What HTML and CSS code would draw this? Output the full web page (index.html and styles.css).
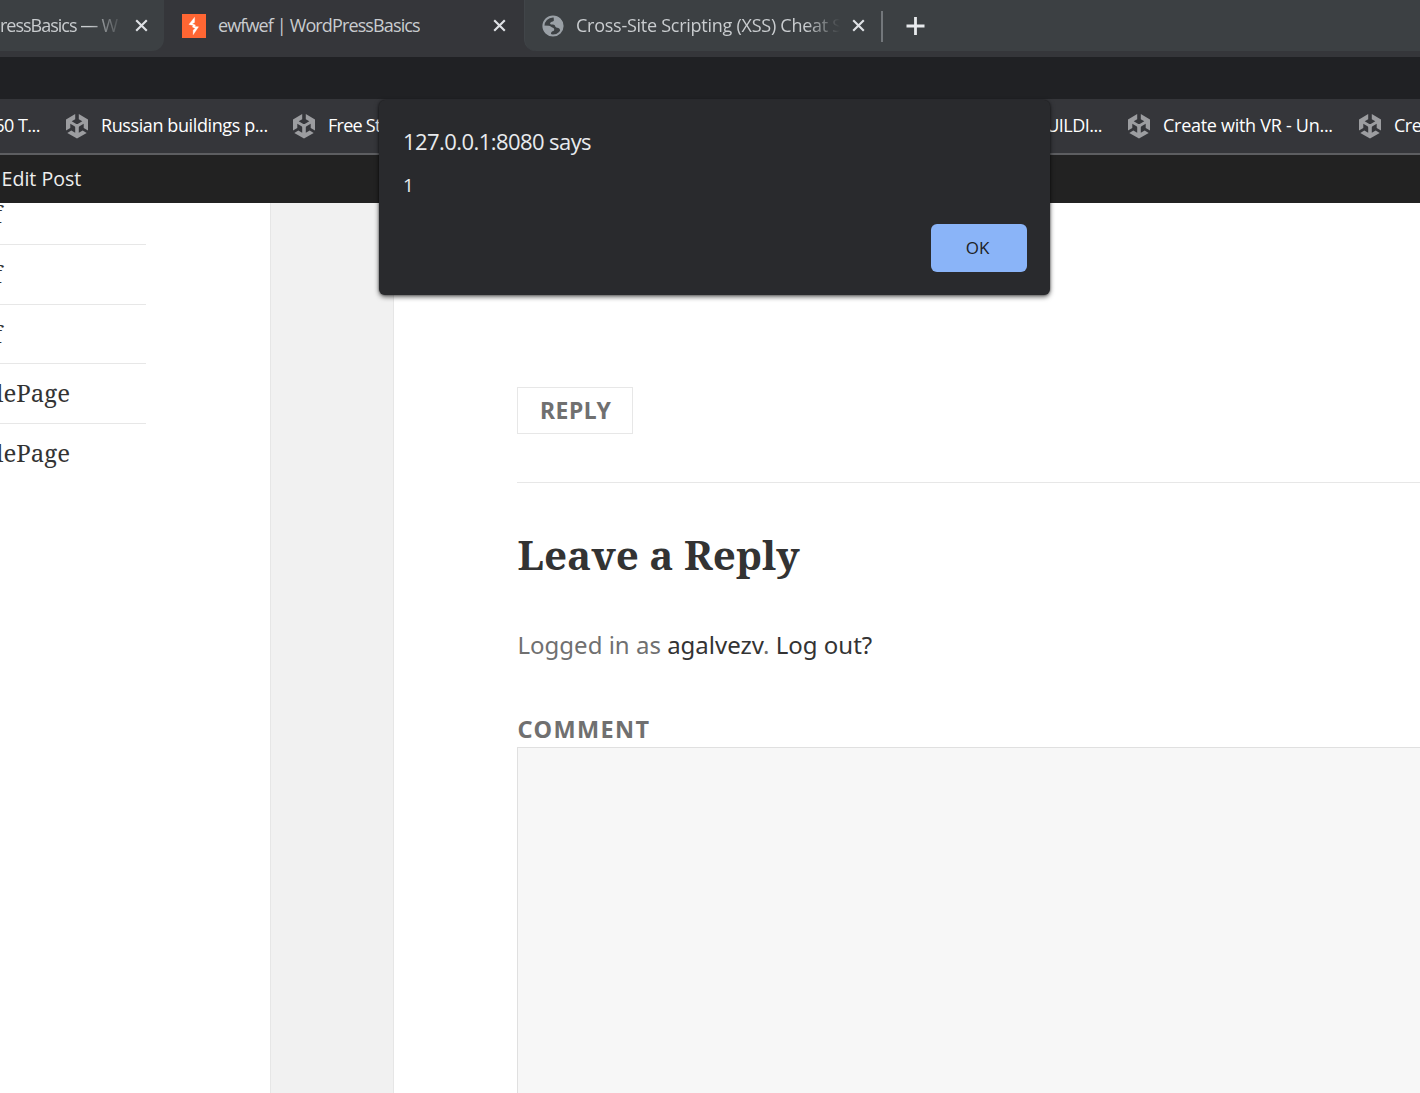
FILE: index.html
```
<!DOCTYPE html>
<html lang="en">
<head>
<meta charset="utf-8">
<title>ewfwef | WordPressBasics</title>
<link rel="stylesheet" href="styles.css">
</head>
<body>
<svg class="defs" aria-hidden="true">
  <symbol id="cube" viewBox="0 0 24 26">
    <path d="M10.2 1v5.2L6.7 8.2l4.6 2.7q.7.4 1.4 0l4.6-2.7-3.5-2V1L23 6.5v11l-4.3-2.6v-4.1l-4.2 2.5q-.7.4-.7 1.2v5.2l3.9-2.2 4 2.4L12 25.5 2.3 19.9l4-2.4 3.9 2.2v-5.2q0-.8-.7-1.2l-4.2-2.5v4.1L1 17.5v-11z"/>
  </symbol>
  <symbol id="close" viewBox="0 0 14 14"><path d="M1.3 1.3l11.4 11.4M12.7 1.3L1.3 12.7"/></symbol>
</svg>
<header class="browser">
  <div class="tabs">
    <div class="tab tab-prev">
      <span class="label t-prev fade">ressBasics <span class="dash">—</span> W</span>
      <svg class="close"><use href="#close"/></svg>
    </div>
    <div class="tab tab-active">
      <svg class="burp" viewBox="0 0 24 24"><path class="burp-bg" d="M0 0h24v24H0z"/><path class="bolt" d="M12.600 3.200v5.200L10.300 9.800l3.200 1.300-.8 1.400 3.900.3-5.400 7.900v-4.600l2.100-1.700-3-1.500.9-1.500-4.300-1z"/></svg>
      <span class="label t-active">ewfwef | WordPressBasics</span>
      <svg class="close"><use href="#close"/></svg>
    </div>
    <div class="tab tab-next">
      <svg class="globe" viewBox="0 0 22 22"><circle class="ring" cx="11" cy="11" r="9.6"/><path class="land" d="M12.5 1.5C10.8 3 12.5 4.6 11.6 6 10.8 7 8.8 6.4 8.2 8c-.4 1.2.6 1.7 2.2 1.6 2.4-.2 2.6 1.4 3.2 2.5.6 1 2.6.6 3.6 1.4.8.6.6 2 1.6 2.2C23 10 20 2 12.5 1.5zM1.5 10.5l5.3.3c1.8 0 2.2 1.4 3.4 1.8 1.6.6 2.3 1.2 1.9 2.7-.4 1.2-2.8.9-3.1 2.6-.1 1 .3 1.6.6 2.5C4 20 1 15 1.5 10.5z"/></svg>
      <span class="label t-next fade">Cross-Site Scripting (XSS) Cheat S</span>
      <svg class="close"><use href="#close"/></svg>
    </div>
    <span class="separator"></span>
    <svg class="plus" viewBox="0 0 18 18"><path d="M9 0v18M0 9h18"/></svg>
  </div>
  <div class="toolbar"></div>
  <nav class="bookmarks">
    <span class="bm bm1"><span class="b-end">60 T...</span></span>
    <span class="bm bm2"><svg><use href="#cube"/></svg><span class="b-russian">Russian buildings p...</span></span>
    <span class="bm bm3"><svg><use href="#cube"/></svg><span class="b-free">Free St</span></span>
    <span class="bm bm4"><span class="b-build">UILDI...</span></span>
    <span class="bm bm5"><svg><use href="#cube"/></svg><span class="b-vr">Create with VR - Un...</span></span>
    <span class="bm bm6"><svg><use href="#cube"/></svg><span>Cre</span></span>
  </nav>
</header>
<div class="adminbar"><span>Edit Post</span></div>
<div class="page">
  <aside class="sidebar">
    <ul class="posts">
      <li><span class="short">f</span></li>
      <li><span class="short">f</span></li>
      <li><span class="short">f</span></li>
      <li><span>lePage</span></li>
      <li><span>lePage</span></li>
    </ul>
  </aside>
  <main class="content">
    <div class="comments"><a class="reply">REPLY</a></div>
    <section class="respond">
      <h2><span>Leave a Reply</span></h2>
      <p class="logged">Logged in as <a>agalvezv</a>. <a>Log out?</a></p>
      <label>COMMENT</label>
      <div class="textarea"></div>
    </section>
  </main>
</div>
<div class="dialog">
  <div class="origin"><span>127.0.0.1:8080 says</span></div>
  <div class="message">1</div>
  <button>OK</button>
</div>
</body>
</html>
```
FILE: styles.css
```
* { box-sizing: border-box; }
body { margin: 0; width: 1420px; height: 1093px; overflow: hidden; display: flex; flex-direction: column; background: #fff; font-family: "Noto Sans", "Open Sans", sans-serif; }
.defs { display: none; }
.browser { flex: none; color: #fff; }
.tabs { display: flex; height: 57px; background: #35363a; }
.tab { display: flex; align-items: center; height: 51px; flex: none; background: #3c4043; }
.label { white-space: nowrap; overflow: hidden; flex: none; color: #c9cccf; font-family: "Open Sans", sans-serif; font-size: 18px; line-height: 28px; padding-bottom: 1px; }
.fade { -webkit-mask-image: linear-gradient(90deg, #000 calc(100% - 34px), transparent); mask-image: linear-gradient(90deg, #000 calc(100% - 34px), transparent); }
.close { width: 13px; height: 13px; stroke: #dfe1e5; stroke-width: 2.3; margin-left: auto; flex: none; }
.tab-prev { width: 164px; padding-right: 16px; border-radius: 0 0 12px 0; }
.t-prev { width: 123px; letter-spacing: -1px; }
.dash { letter-spacing: -.5px; }
.tab-active { width: 360px; height: 57px; padding: 0 18px 6px; background: #35363a; }
.t-active { letter-spacing: -.87px; }
.burp { width: 24px; height: 24px; margin-right: 12px; }
.burp-bg { fill: #ff6633; }
.bolt { fill: #fff; stroke: #fff; stroke-width: .3; }
.tab-next { width: 357px; padding: 0 16px 0 17px; border-radius: 0 0 0 12px; border-left: 1px solid #414549; }
.globe { width: 22px; height: 22px; margin-right: 12px; }
.ring { fill: none; stroke: #9aa0a6; stroke-width: 2; }
.land { fill: #9aa0a6; }
.t-next { width: 264px; letter-spacing: -.26px; }
.separator { width: 34px; height: 51px; background: linear-gradient(#73777b, #73777b) 0 11px / 2px 31px no-repeat #3c4043; }
.tabs > .plus { height: 51px; padding: 17px 494px 16px 0; flex: 1; margin-left: -10px; background: #3c4043; stroke: #e8eaed; stroke-width: 2.8; }
.toolbar { height: 42px; background: #202124; }
.bookmarks { display: flex; height: 56px; background: #35363a; border-bottom: 2px solid #5d5e61; overflow: hidden; font-family: "Open Sans", sans-serif; font-size: 18px; line-height: 28px; white-space: nowrap; letter-spacing: -.5px; }
.bm { display: flex; align-items: center; gap: 12px; flex: none; }
.bm svg { width: 24px; height: 26px; fill: #9c9da0; }
.bm > span { padding-bottom: 2px; }
.bm1 { width: 65px; padding-right: 25px; justify-content: flex-end; }
.bm2 { width: 227px; }
.b-russian { letter-spacing: -.4px; }
.bm3 { width: 740px; }
.b-free { letter-spacing: -.75px; }
.bm4 { width: 95px; padding-right: 25px; justify-content: flex-end; }
.bm5 { width: 231px; }
.b-vr { letter-spacing: -.28px; }
.bm6 { width: 70px; }
.adminbar { flex: none; height: 48px; background: #222; color: #eee; font: 19.6px/48px "Open Sans", sans-serif; padding-left: 1.5px; }
.page { flex: 1; min-height: 0; display: flex; background: #f1f1f1; }
.sidebar { width: 271px; border-right: 1px solid #e6e6e6; background: #fff; overflow: hidden; }
.posts { list-style: none; margin: -17.6px 0 0; padding: 0; width: 146px; font: 24px/57px "Noto Serif", "DejaVu Serif Condensed", serif; color: #333; }
.posts li { height: 59.6px; border-bottom: 1px solid #e7e7e7; }
.posts li:last-child { border: 0; }
.posts span { display: flex; justify-content: flex-end; width: 70px; }
.posts .short { width: 2px; }
.content { flex: 1; margin-left: 122px; border-left: 1px solid #e6e6e6; background: #fff; padding: 184px 0 0 123px; display: flex; flex-direction: column; }
.comments { height: 96px; border-bottom: 1px solid #e7e7e7; flex: none; }
.reply { display: flex; align-items: center; width: 116px; height: 47px; padding: 0 0 2px 22px; border: 1px solid #e7e7e7; font: bold 23px/30px "Noto Sans", sans-serif; color: #707070; letter-spacing: .5px; }
.respond { flex: 1; display: flex; flex-direction: column; color: #707070; }
h2 { margin: 42px 0 0 .5px; font: bold 40.4px/60px "Noto Serif", "DejaVu Serif Condensed", serif; color: #333; }
.logged { margin: 41px 0 0 .5px; font-size: 24px; line-height: 38px; }
.logged a { color: #333; }
label { margin: 47px 0 0 .5px; font-weight: bold; font-size: 23.5px; line-height: 36px; letter-spacing: 1.35px; }
.textarea { flex: 1; border: 1px solid #e0e0e0; border-width: 1px 0 0 1px; background: #f7f7f7; }
.dialog { position: absolute; left: 379px; top: 100px; width: 671px; height: 195px; padding: 23px 23px 23px 24px; border-radius: 6px; background: #292a2d; box-shadow: 0 2px 5px rgba(0,0,0,.6), 0 0 2px rgba(0,0,0,.5); color: #e8eaed; display: flex; flex-direction: column; font-family: "Open Sans", sans-serif; }
.origin { font-size: 22px; line-height: 36px; letter-spacing: -.57px; }
.message { font-size: 19px; line-height: 28px; margin-top: 12px; }
button { align-self: flex-end; margin-top: 25px; width: 96px; height: 48px; flex: none; border: 0; border-radius: 6px; background: #8ab4f8; color: #202124; font: 500 17px "Open Sans", sans-serif; padding: 0 8px 2px 5px; }
```
